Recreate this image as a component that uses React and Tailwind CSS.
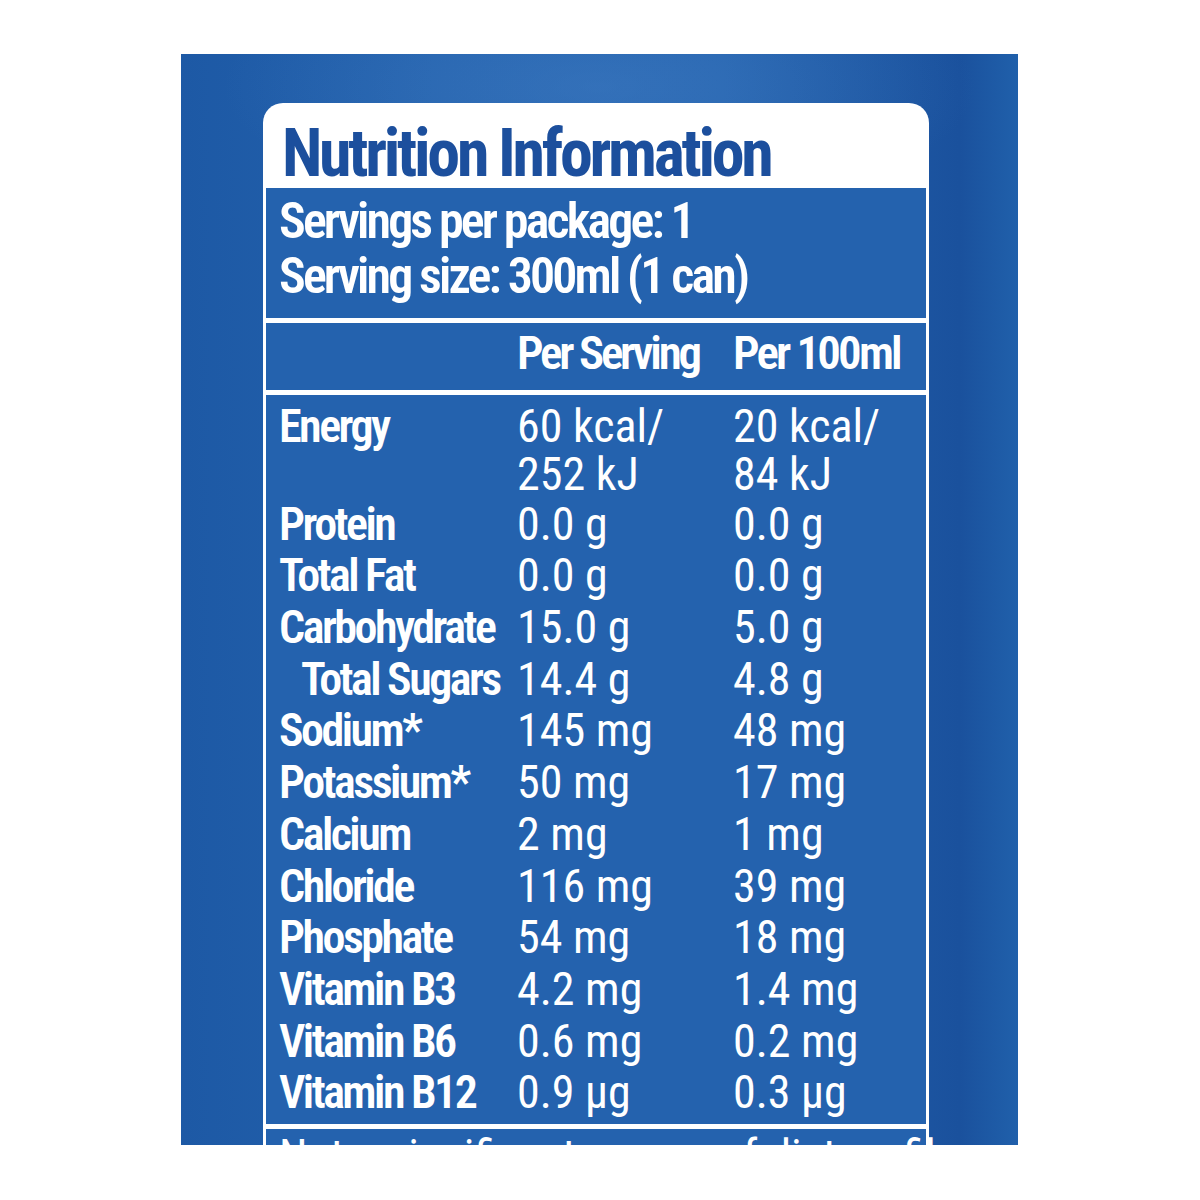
import React from "react";

const T = "font-['Roboto',sans-serif] font-bold font-stretch-condensed";
const B = "font-['Roboto',sans-serif] font-semibold font-stretch-condensed";
const R = "font-['Roboto',sans-serif] font-normal font-stretch-condensed";

const rows = [
  ["Protein", "0.0 g", "0.0 g"],
  ["Total Fat", "0.0 g", "0.0 g"],
  ["Carbohydrate", "15.0 g", "5.0 g"],
  ["Total Sugars", "14.4 g", "4.8 g", true],
  ["Sodium*", "145 mg", "48 mg"],
  ["Potassium*", "50 mg", "17 mg"],
  ["Calcium", "2 mg", "1 mg"],
  ["Chloride", "116 mg", "39 mg"],
  ["Phosphate", "54 mg", "18 mg"],
  ["Vitamin B3", "4.2 mg", "1.4 mg"],
  ["Vitamin B6", "0.6 mg", "0.2 mg"],
  ["Vitamin B12", "0.9 µg", "0.3 µg"],
];

export default function App() {
  return (
    <div className="w-[1200px] h-[1200px] bg-white overflow-hidden pt-[54px] pl-[181px]">
      <div className="w-[837px] h-[1091px] overflow-hidden pl-[82px] pt-[49px] bg-[radial-gradient(ellipse_45%_12%_at_50%_3%,rgba(70,130,200,0.45),rgba(70,130,200,0)),linear-gradient(90deg,#1d59a5_0%,#2462ad_30%,#2563ae_65%,#1a519d_93%,#2060ab_100%)]">
        <div className="w-[666px] bg-white rounded-t-[20px] px-[3px] flex flex-col gap-[5px]">
          {/* Title */}
          <div className="h-[85px] -mb-[5px] pt-[18px] pl-[16px]">
            <div className={`${T} text-[66px] leading-[66px] tracking-[-0.05em] text-[#1c4f9d] whitespace-nowrap`}>
              Nutrition Information
            </div>
          </div>
          {/* Servings */}
          <div className="h-[130px] bg-[#2462ae] pt-[6px] pl-[13px]">
            <div className={`${B} text-[50px] leading-[55px] tracking-[-0.057em] text-white whitespace-nowrap`}>
              <div>Servings per package: 1</div>
              <div>Serving size: 300ml (1 can)</div>
            </div>
          </div>
          {/* Header */}
          <div className="h-[67px] bg-[#2462ae] pl-[13px] grid grid-cols-[238px_216px_1fr]">
            <div />
            <div className={`${B} text-[47px] leading-[60px] tracking-[-0.068em] text-white whitespace-nowrap`}>Per Serving</div>
            <div className={`${B} text-[47px] leading-[60px] tracking-[-0.06em] text-white whitespace-nowrap`}>Per 100ml</div>
          </div>
          {/* Body */}
          <div className="h-[729px] bg-[#2462ae] pt-[8px] pl-[13px] text-white">
            <div className="grid grid-cols-[238px_216px_1fr] h-[95.6px]">
              <div className={`${B} text-[46px] leading-[47.8px] tracking-[-0.055em]`}>Energy</div>
              <div className={`${R} text-[46px] leading-[47.8px] whitespace-nowrap`}>
                <div>60 kcal/</div>
                <div>252 kJ</div>
              </div>
              <div className={`${R} text-[46px] leading-[47.8px] whitespace-nowrap`}>
                <div>20 kcal/</div>
                <div>84 kJ</div>
              </div>
            </div>
            {rows.map(([label, a, b, indent]) => (
              <div key={label} className="grid grid-cols-[238px_216px_1fr]">
                <div
                  className={`${B} text-[46px] leading-[51.7px] tracking-[-0.055em] whitespace-nowrap ${
                    indent ? "pl-[22px]" : ""
                  }`}
                >
                  {label}
                </div>
                <div className={`${R} text-[46px] leading-[51.7px] whitespace-nowrap`}>{a}</div>
                <div className={`${R} text-[46px] leading-[51.7px] whitespace-nowrap`}>{b}</div>
              </div>
            ))}
          </div>
          {/* Footer (cut off at panel edge) */}
          <div className="h-[60px] bg-[#2462ae] pt-[2px] pl-[13px]">
            <div className={`${R} text-[46px] leading-[51.7px] text-white whitespace-nowrap`}>
              Not a significant source of dietary fibre
            </div>
          </div>
        </div>
      </div>
    </div>
  );
}
